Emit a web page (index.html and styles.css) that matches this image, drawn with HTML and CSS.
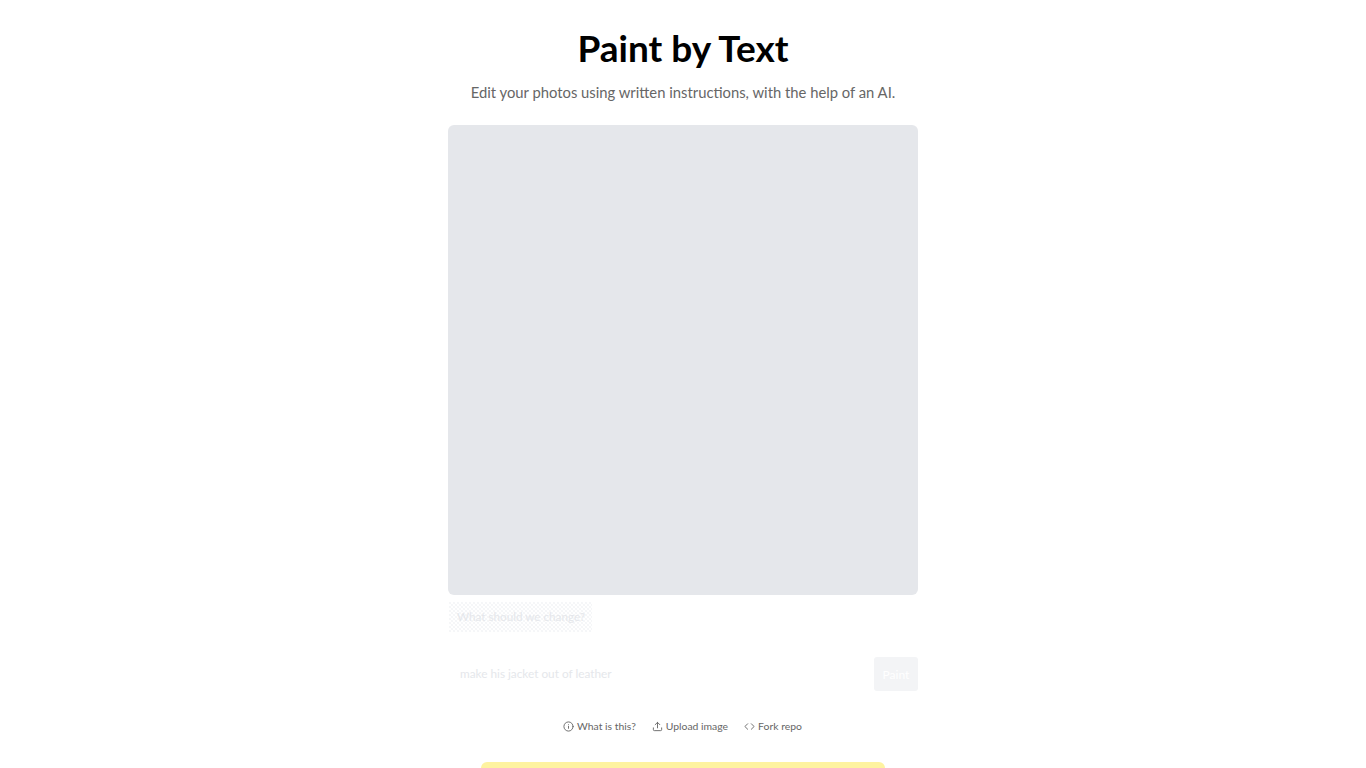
FILE: index.html
```html
<!DOCTYPE html>
<html lang="en">
<head>
    <meta charset="utf-8">
    <meta name="viewport" content="width=device-width, initial-scale=1">
    <link rel="stylesheet" href="styles.css">
    <title>Paint by Text</title>
</head>
<body>
    <main class="page">
        <header class="intro">
            <h1 class="title">Paint by Text</h1>
            <p class="tagline">Edit your photos using written instructions, with the help of an AI.</p>
        </header>
        <div class="canvas"></div>
        <div class="messages">
            <div class="bubble">What should we change?</div>
        </div>
        <form class="prompt">
            <input class="prompt-input" type="text" placeholder="make his jacket out of leather">
            <button class="prompt-button" type="button">Paint</button>
        </form>
        <nav class="links">
            <a class="link" href="#">
                <svg class="icon" viewBox="0 0 24 24"><circle cx="12" cy="12" r="10"/><path d="M12 16v-4.500M12 8h.01"/></svg>
                What is this?
            </a>
            <a class="link" href="#">
                <svg class="icon" viewBox="0 0 24 24"><path d="M21 15v4a2 2 0 0 1-2 2H5a2 2 0 0 1-2-2v-4M17 8l-5-5-5 5M12 3v12"/></svg>
                Upload image
            </a>
            <a class="link" href="#">
                <svg class="icon" viewBox="0 0 24 24"><path d="M16 18l6-6-6-6M8 6l-6 6 6 6"/></svg>
                Fork repo
            </a>
        </nav>
        <div class="notice"></div>
    </main>
</body>
</html>
```

FILE: styles.css
```css
* { margin: 0; padding: 0; box-sizing: border-box; }
html, body { height: 100%; }
body { background: white; font-family: Lato, "Noto Sans", sans-serif; }
.page { width: 470px; margin: 0 auto; padding-top: 24px; }
.intro { text-align: center; white-space: nowrap; }
.title { font-size: 37px; line-height: 48px; font-weight: 700; color: #000; }
.tagline { margin-top: 8px; font-size: 14.8px; line-height: 24px; color: #666; }
.canvas { width: 470px; height: 470px; margin-top: 21px; background: #e5e7eb; border-radius: 6px; }
.messages { display: flex; margin-top: 7px; padding-left: 1px; }
.bubble { width: 143px; padding: 0 8px 2px; font-size: 11.7px; line-height: 28px; color: #e5e7eb; white-space: nowrap; background-image: radial-gradient(circle at 1px 1px, #f5f6f8 0.7px, transparent 0.8px), radial-gradient(circle at 3px 3px, #f5f6f8 0.7px, transparent 0.8px); background-size: 4px 4px; }
.prompt { display: flex; height: 34px; margin-top: 25px; }
.prompt-input { flex: 1; min-width: 0; padding: 0 12px 2px; border: none; outline: none; background: transparent; font: inherit; font-size: 11.8px; }
.prompt-input::placeholder { color: #e5e7eb; opacity: 1; }
.prompt-button { width: 44px; border: none; border-radius: 3px; background: #f3f4f6; color: #fff; font: inherit; font-size: 12px; }
.links { display: flex; justify-content: center; gap: 16px; margin-top: 27px; padding-right: 1px; }
.link { display: flex; align-items: center; gap: 3px; font-size: 10.4px; line-height: 16px; color: #666; text-decoration: none; }
.icon { width: 11px; height: 11px; fill: none; stroke: #666; stroke-width: 2; stroke-linecap: round; stroke-linejoin: round; }
.notice { width: 404px; height: 6px; margin: 28px auto 0; background: #fef3a0; border-radius: 6px 6px 0 0; }
```
